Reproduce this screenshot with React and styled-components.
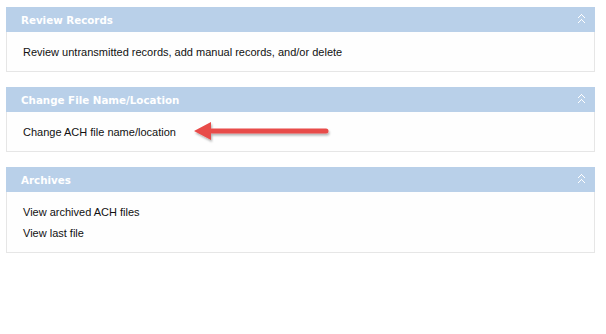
import React from "react";
import styled, { createGlobalStyle } from "styled-components";

const GlobalStyle = createGlobalStyle`
  body {
    margin: 0;
    background: #ffffff;
    font-family: Tahoma, "DejaVu Sans", "Liberation Sans", sans-serif;
  }
`;

const Page = styled.div`
  width: 606px;
  height: 334px;
  padding: 7px 11px 0 6px;
  box-sizing: border-box;
  display: flex;
  flex-direction: column;
  gap: 15px;
`;

const Panel = styled.section`
  border: 1px solid #e6e6e6;
  border-top: none;
  background: #fefefe;
`;

const Header = styled.div`
  height: 25px;
  background: #b9d0e9;
  display: flex;
  align-items: center;
  justify-content: space-between;
  padding: 0 10px 0 15px;
  margin: 0 -1px;
  color: #ffffff;
  font-family: "DejaVu Sans", sans-serif;
  font-weight: bold;
  font-size: 10.3px;
`;

const Body = styled.div`
  padding: 9px 16px 9px;
  display: flex;
  flex-direction: column;
`;

const Line = styled.div`
  height: 21px;
  display: flex;
  align-items: center;
  gap: 18px;
  font-family: "Liberation Sans", Arial, sans-serif;
  font-size: 11px;
  color: #111111;
`;

const Collapse = () => (
  <svg width="7" height="11" viewBox="0 0 7 11" shapeRendering="crispEdges">
    <path
      d="M3 0h1v1h1v1h1v1h1v1H6V3H5V2H4V1H3v1H2v1H1v1H0V3h1V2h1V1h1z M3 5h1v1h1v1h1v1h1v1H6V8H5V7H4V6H3v1H2v1H1v1H0V8h1V7h1V6h1z"
      fill="#ffffff"
    />
  </svg>
);

const Arrow = () => (
  <svg width="140" height="24" viewBox="0 0 140 24" style={{ overflow: "visible" }}>
    <defs>
      <filter id="sh" x="-10%" y="-50%" width="120%" height="200%">
        <feDropShadow dx="1" dy="2" stdDeviation="1.2" floodColor="#000" floodOpacity="0.3" />
      </filter>
    </defs>
    <g filter="url(#sh)" fill="#e84c4a">
      <path d="M0 11 L17 2 L17 8.5 L132 8.5 A2.5 2.5 0 0 1 132 13.5 L17 13.5 L17 20 Z" />
    </g>
  </svg>
);

const sections = [
  {
    title: "Review Records",
    lines: ["Review untransmitted records, add manual records, and/or delete"],
  },
  { title: "Change File Name/Location", lines: ["Change ACH file name/location"], arrow: true },
  { title: "Archives", lines: ["View archived ACH files", "View last file"] },
];

export default function App() {
  return (
    <>
      <GlobalStyle />
      <Page>
        {sections.map((s) => (
          <Panel key={s.title}>
            <Header>
              <span>{s.title}</span>
              <Collapse />
            </Header>
            <Body>
              {s.lines.map((l) => (
                <Line key={l}>
                  <span>{l}</span>
                  {s.arrow && <Arrow />}
                </Line>
              ))}
            </Body>
          </Panel>
        ))}
      </Page>
    </>
  );
}
